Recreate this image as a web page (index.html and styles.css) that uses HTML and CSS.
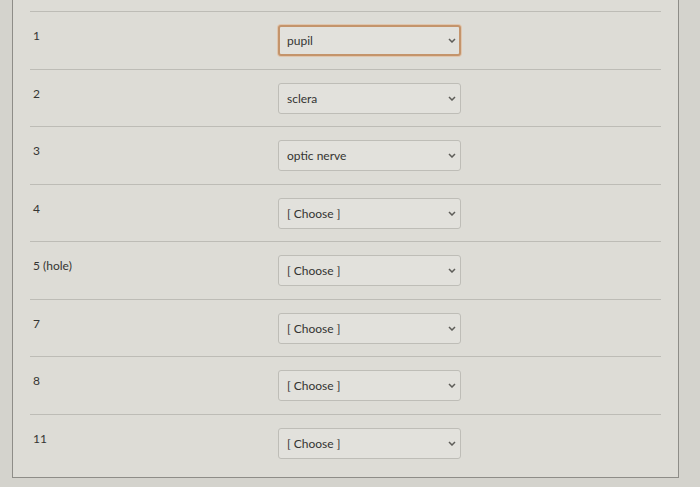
FILE: index.html
```html
<!DOCTYPE html>
<html>
<head>
<meta charset="utf-8">
<link rel="stylesheet" href="styles.css">
</head>
<body>
<div class="panel">
  <div class="row">
    <div class="label">1</div>
    <div class="pick focused">
      <select><option>pupil</option></select>
      <svg class="chev" viewBox="0 0 8 5"><path d="M1 1 L4 4 L7 1"/></svg>
    </div>
  </div>
  <div class="row">
    <div class="label">2</div>
    <div class="pick">
      <select><option>sclera</option></select>
      <svg class="chev" viewBox="0 0 8 5"><path d="M1 1 L4 4 L7 1"/></svg>
    </div>
  </div>
  <div class="row">
    <div class="label">3</div>
    <div class="pick">
      <select><option>optic nerve</option></select>
      <svg class="chev" viewBox="0 0 8 5"><path d="M1 1 L4 4 L7 1"/></svg>
    </div>
  </div>
  <div class="row">
    <div class="label">4</div>
    <div class="pick">
      <select><option>[ Choose ]</option></select>
      <svg class="chev" viewBox="0 0 8 5"><path d="M1 1 L4 4 L7 1"/></svg>
    </div>
  </div>
  <div class="row">
    <div class="label">5 (hole)</div>
    <div class="pick">
      <select><option>[ Choose ]</option></select>
      <svg class="chev" viewBox="0 0 8 5"><path d="M1 1 L4 4 L7 1"/></svg>
    </div>
  </div>
  <div class="row">
    <div class="label">7</div>
    <div class="pick">
      <select><option>[ Choose ]</option></select>
      <svg class="chev" viewBox="0 0 8 5"><path d="M1 1 L4 4 L7 1"/></svg>
    </div>
  </div>
  <div class="row">
    <div class="label">8</div>
    <div class="pick">
      <select><option>[ Choose ]</option></select>
      <svg class="chev" viewBox="0 0 8 5"><path d="M1 1 L4 4 L7 1"/></svg>
    </div>
  </div>
  <div class="row last">
    <div class="label">11</div>
    <div class="pick">
      <select><option>[ Choose ]</option></select>
      <svg class="chev" viewBox="0 0 8 5"><path d="M1 1 L4 4 L7 1"/></svg>
    </div>
  </div>
</div>
</body>
</html>
```
FILE: styles.css
```css
html, body {
  margin: 0;
  padding: 0;
  background: #d4d3cd;
  font-family: Lato, "Liberation Sans", sans-serif;
}
.panel {
  margin-left: 12px;
  width: 667px;
  height: 478px;
  box-sizing: border-box;
  padding-top: 11px;
  background: #dddcd6;
  border-left: 1px solid #8e8d88;
  border-right: 1px solid #8e8d88;
  border-bottom: 1px solid #8e8d88;
}
.row {
  display: flex;
  align-items: flex-start;
  height: 57.5px;
  box-sizing: border-box;
  margin: 0 17px 0 17px;
  border-top: 1px solid #bdbcb6;
}
.row.last {
  height: 63px;
}
.label {
  width: 245px;
  padding-left: 3px;
  padding-top: 17px;
  font-size: 12px;
  line-height: 14px;
  color: #353533;
}
.pick {
  position: relative;
  margin-top: 13px;
  width: 183px;
  height: 31px;
}
.pick select {
  -webkit-appearance: none;
  appearance: none;
  width: 100%;
  height: 100%;
  box-sizing: border-box;
  margin: 0;
  padding: 0 0 0 8px;
  border: 1px solid #bebdb7;
  border-radius: 3px;
  background: #e2e1dc;
  font-family: Lato, "Liberation Sans", sans-serif;
  font-size: 12px;
  color: #343432;
  outline: none;
}
.pick.focused select {
  border: 2px solid #c4946b;
  padding-left: 7px;
  box-shadow: 0 0 0 1px #e0c6ae;
}
.chev {
  position: absolute;
  right: 5px;
  top: 13px;
  width: 8px;
  height: 5px;
  fill: none;
  stroke: #5e5d59;
  stroke-width: 1.5;
}
```
